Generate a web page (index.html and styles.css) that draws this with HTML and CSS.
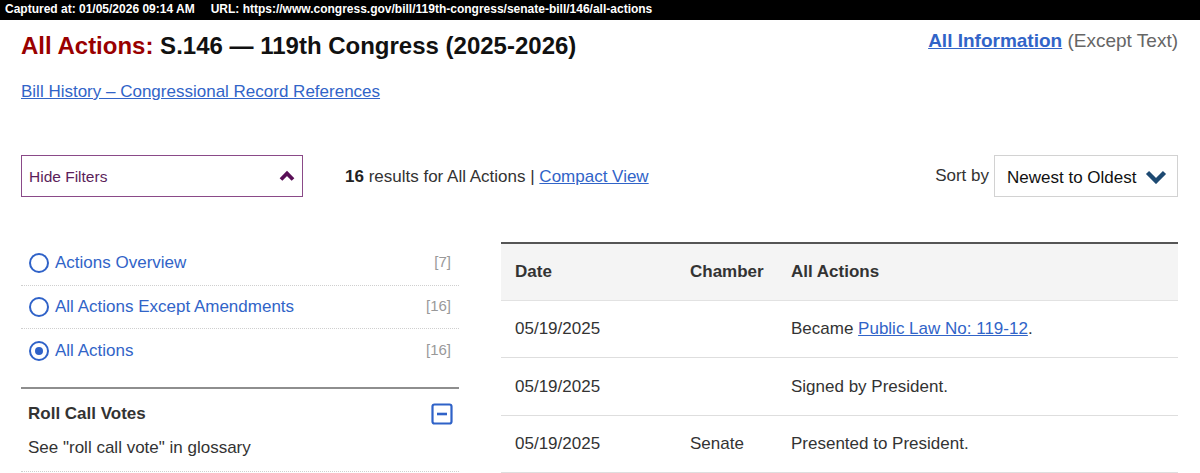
FILE: index.html
```html
<!DOCTYPE html>
<html lang="en">
<head>
<meta charset="utf-8">
<title>All Actions: S.146 — 119th Congress (2025-2026)</title>
<link rel="stylesheet" href="styles.css">
</head>
<body>
<div class="capbar"><span>Captured at: 01/05/2026 09:14 AM</span><span class="cap-url">URL: https://www.congress.gov/bill/119th-congress/senate-bill/146/all-actions</span></div>
<main class="page">
  <header class="head">
    <h1 class="title"><span class="title-red">All Actions:</span> S.146 — 119th Congress (2025-2026)</h1>
    <div class="allinfo"><a href="#" class="allinfo-link">All Information</a> (Except Text)</div>
  </header>
  <a href="#" class="history">Bill History – Congressional Record References</a>
  <div class="toolbar">
    <div class="toggle">
      <span class="toggle-label">Hide Filters</span>
      <svg class="chev-up" width="16" height="11" viewBox="0 0 16 11"><polyline points="2,9.5 8,3.5 14,9.5" fill="none" stroke="#5a0f57" stroke-width="3.8"/></svg>
    </div>
    <div class="count"><b>16</b> results for All Actions | <a href="#">Compact View</a></div>
    <div class="sort">
      <span class="sort-label">Sort by</span>
      <div class="select">
        <span>Newest to Oldest</span>
        <svg class="chev-down" width="22" height="14" viewBox="0 0 22 14"><polyline points="2.5,2.5 11,11 19.5,2.5" fill="none" stroke="#1d4a72" stroke-width="4.4"/></svg>
      </div>
    </div>
  </div>
  <div class="content">
    <aside class="filters">
      <ul class="radio-list">
        <li class="radio-item"><span class="radio"></span><span class="radio-label">Actions Overview</span><span class="radio-count">[7]</span></li>
        <li class="radio-item"><span class="radio"></span><span class="radio-label">All Actions Except Amendments</span><span class="radio-count">[16]</span></li>
        <li class="radio-item"><span class="radio checked"></span><span class="radio-label">All Actions</span><span class="radio-count">[16]</span></li>
      </ul>
      <section class="facet">
        <div class="facet-head">
          <h2 class="facet-title">Roll Call Votes</h2>
          <svg class="minus" width="22" height="22" viewBox="0 0 22 22"><rect x="1.5" y="1.5" width="19" height="19" rx="2" fill="none" stroke="#2f62c8" stroke-width="2.2"/><line x1="6" y1="11" x2="16" y2="11" stroke="#2f62c8" stroke-width="2.6"/></svg>
        </div>
        <p class="facet-text">See "roll call vote" in glossary</p>
      </section>
    </aside>
    <table class="actions">
      <thead>
        <tr><th class="c-date">Date</th><th class="c-chamber">Chamber</th><th>All Actions</th></tr>
      </thead>
      <tbody>
        <tr><td>05/19/2025</td><td></td><td>Became <a href="#">Public Law No: 119-12</a>.</td></tr>
        <tr><td>05/19/2025</td><td></td><td>Signed by President.</td></tr>
        <tr><td>05/19/2025</td><td>Senate</td><td>Presented to President.</td></tr>
      </tbody>
    </table>
  </div>
</main>
</body>
</html>
```
FILE: styles.css
```css
* { box-sizing: border-box; }
html, body { margin: 0; padding: 0; background: #fff; }
body {
  font-family: "Liberation Sans", Arial, sans-serif;
  font-size: 17px;
  color: #333;
  overflow: hidden;
}
a { color: #3164c8; text-decoration: underline; }

.capbar {
  background: #000;
  color: #fff;
  font-weight: bold;
  font-size: 12px;
  height: 20px;
  line-height: 19px;
  padding-left: 5px;
  white-space: nowrap;
}
.cap-url { margin-left: 16px; }

.page { padding: 0 22px 0 21px; }

.head {
  display: flex;
  justify-content: space-between;
  align-items: flex-start;
  padding-top: 10px;
}
.title {
  margin: 2px 0 0;
  font-size: 24px;
  line-height: 28px;
  font-weight: bold;
  color: #111;
}
.title-red { color: #990000; }
.allinfo {
  font-size: 19px;
  line-height: 22px;
  color: #666;
}
.allinfo-link { font-weight: bold; }

.history {
  display: inline-block;
  margin-top: 22px;
  line-height: 20px;
}

.toolbar {
  display: flex;
  align-items: center;
  margin-top: 53px;
  height: 42px;
}
.toggle {
  width: 282px;
  height: 42px;
  border: 1px solid #8a4a88;
  display: flex;
  align-items: center;
  justify-content: space-between;
  padding: 0 7px 0 7px;
  color: #5b1e5a;
  font-size: 15.5px;
}
.toggle-label { margin-top: 2px; }
.chev-up { margin-top: -2px; }
.count {
  margin-left: 42px;
  margin-top: 2px;
  color: #333;
}
.count b { color: #222; }
.sort {
  margin-left: auto;
  display: flex;
  align-items: center;
  gap: 5px;
}
.sort-label { color: #333; margin-top: -1px; }
.select {
  width: 184px;
  height: 42px;
  border: 1px solid #d2d2d2;
  display: flex;
  align-items: center;
  justify-content: space-between;
  padding: 4px 10px 0 12px;
  color: #111;
}
.chev-down { margin-top: -3px; }

.content {
  display: flex;
  gap: 42px;
  margin-top: 45px;
  align-items: flex-start;
}
.filters { width: 438px; flex: none; }
.radio-list { list-style: none; margin: 0; padding: 0; }
.radio-item {
  display: flex;
  align-items: center;
  height: 43.5px;
  padding: 0 8px;
  border-bottom: 1px dotted #cfcfcf;
}
.radio-item:last-child { border-bottom: none; height: 43px; }
.radio {
  width: 20px;
  height: 20px;
  border: 2px solid #2f62c8;
  border-radius: 50%;
  flex: none;
  margin-right: 6px;
  position: relative;
}
.radio.checked::after {
  content: "";
  position: absolute;
  left: 4px;
  top: 4px;
  width: 8px;
  height: 8px;
  border-radius: 50%;
  background: #2f62c8;
}
.radio-label { color: #3164c8; }
.radio-count {
  margin-left: auto;
  color: #999;
  font-size: 15px;
  margin-top: -3px;
}

.facet {
  margin-top: 15px;
  border-top: 2px solid #8e8e8e;
  border-bottom: 1px dotted #cfcfcf;
  padding: 14px 7px 12px 7px;
}
.facet-head {
  display: flex;
  align-items: center;
  justify-content: space-between;
  height: 22px;
}
.facet-title {
  margin: 0;
  font-size: 17px;
  font-weight: bold;
  color: #333;
  line-height: 22px;
}
.minus { margin-right: -1px; }
.facet-text {
  margin: 12px 0 0;
  line-height: 22px;
  color: #333;
}

.actions {
  flex: 1;
  border-collapse: collapse;
  border-top: 2px solid #555;
  color: #333;
}
.actions th {
  background: #f4f4f4;
  text-align: left;
  font-weight: bold;
  height: 57px;
  padding: 1px 0 0 14px;
  border-bottom: 1px solid #e2e2e2;
}
.actions th.c-date { width: 175px; }
.actions th.c-chamber { width: 101px; }
.actions td {
  height: 57.5px;
  padding: 1px 0 0 14px;
  border-bottom: 1px solid #dedede;
}
```
